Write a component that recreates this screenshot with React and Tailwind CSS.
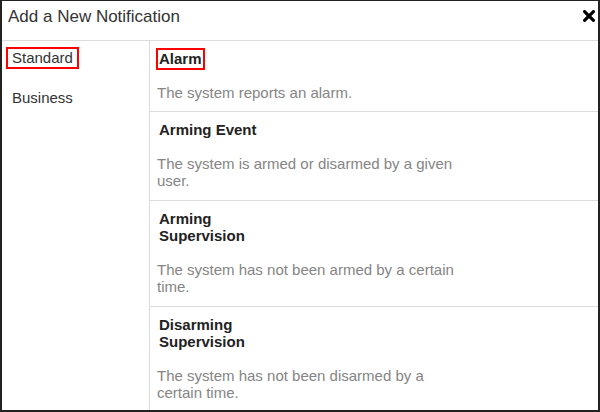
export default function App() {
  const rows = [
    { title: "Alarm", desc: "The system reports an alarm.", active: true },
    { title: "Arming Event", desc: "The system is armed or disarmed by a given user." },
    { title: "Arming Supervision", desc: "The system has not been armed by a certain time." },
    { title: "Disarming Supervision", desc: "The system has not been disarmed by a certain time." },
  ];
  return (
    <div
      className="w-[600px] h-[412px] bg-white border-t border-l-2 border-r-2 border-b-2 border-[#222] flex flex-col overflow-hidden"
      style={{ fontFamily: '"Liberation Sans", Arial, sans-serif' }}
    >
      <div className="h-[40px] shrink-0 border-b border-[#dcdcdc] flex items-start justify-between pl-[6px] pr-[3px] pt-[6px]">
        <span className="text-[17px] leading-[20px] text-[#333]">Add a New Notification</span>
        <svg width="12" height="12" viewBox="0 0 12 12" className="mt-[3px]">
          <path d="M1.6 1.6 L10.4 10.4 M10.4 1.6 L1.6 10.4" stroke="#000" strokeWidth="3.2" strokeLinecap="round" />
        </svg>
      </div>
      <div className="flex flex-1 min-h-0">
        <div className="w-[148px] shrink-0 border-r border-[#dcdcdc] pt-[6px] pl-[4px] flex flex-col items-start gap-[18px]">
          <span className="border-2 border-[#f00] pl-[4px] pr-[4px] text-[15px] leading-[17.5px] text-[#333]">Standard</span>
          <span className="border-2 border-transparent pl-[4px] pr-[4px] text-[15px] leading-[17.5px] text-[#333]">Business</span>
        </div>
        <div className="flex-1 flex flex-col">
          {rows.map((r, i) => (
            <div key={i} className="flex flex-col items-start border-b border-[#dcdcdc] pt-[7px] pb-[10px] pl-[6px] shrink-0">
              <div
                className={
                  "max-w-[115px] border-2 pl-[1px] pr-[1px] text-[15px] leading-[17.5px] font-bold text-[#222] " +
                  (r.active ? "border-[#f00]" : "border-transparent")
                }
              >
                {r.title}
              </div>
              <div className="mt-[14px] ml-[1px] max-w-[305px] text-[15px] leading-[17.5px] text-[#858585]">{r.desc}</div>
            </div>
          ))}
        </div>
      </div>
    </div>
  );
}
